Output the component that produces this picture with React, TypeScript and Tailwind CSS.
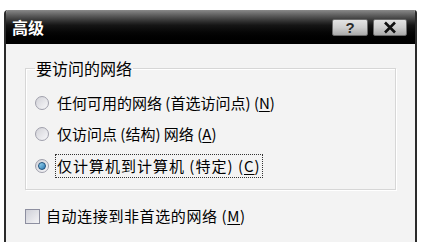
const font = { fontFamily: '"Noto Sans CJK SC", "Liberation Sans", sans-serif' };

const Radio = ({ checked }: { checked?: boolean }) => (
  <span className="relative flex h-[14px] w-[14px] shrink-0 items-center justify-center rounded-full border border-[#a0a0ac] bg-gradient-to-br from-[#d2d2d8] to-[#f8f8fa]">
    {checked && (
      <span className="h-[8px] w-[8px] rounded-full border border-[#1d4f7a] bg-gradient-to-br from-[#9adaf4] to-[#2a78b0]" />
    )}
  </span>
);

const Key = ({ k }: { k: string }) => (
  <span>
    (<span className="underline underline-offset-2">{k}</span>)
  </span>
);

const TitleButton = ({ children, w }: { children: React.ReactNode; w: string }) => (
  <div
    className={`flex h-[17px] ${w} items-center justify-center rounded-[2px] border border-[#6a6a6a] bg-gradient-to-b from-[#e4e4e4] via-[#cfcfcf] to-[#a9a9a9]`}
  >
    {children}
  </div>
);

export default function App() {
  return (
    <div className="h-[242px] w-[426px] overflow-hidden bg-white pl-[4px] pr-[9px] pt-[10px]" style={font}>
      <div className="flex h-full flex-col overflow-hidden rounded-tl-[4px] rounded-tr-[3px] border-x-2 border-[#2b2b2b]">
        {/* title bar */}
        <div className="flex h-[34px] shrink-0 items-center bg-gradient-to-b from-[#8a8a8a] via-[#151515] via-45% to-black pl-[6px] pr-[8px]">
          <span className="text-[16px] font-bold text-white">高级</span>
          <div className="ml-auto flex gap-[5px] pt-[1px]">
            <TitleButton w="w-[36px]">
              <span className="text-[15px] font-bold leading-none text-[#2a2a2a]" style={{ fontFamily: '"Liberation Sans", sans-serif' }}>
                ?
              </span>
            </TitleButton>
            <TitleButton w="w-[34px]">
              <svg width="16" height="13" viewBox="0 0 16 13">
                <path d="M3 1.5 L13 11.5 M13 1.5 L3 11.5" stroke="#111" strokeWidth="2.6" />
              </svg>
            </TitleButton>
          </div>
        </div>

        {/* body */}
        <div className="flex flex-1 flex-col bg-[#f3f3f3] pl-[19px] pr-[19px] pt-[15px] text-[15px] text-black">
          <fieldset className="h-[131px] border border-[#d6d6d6] pl-[9px] shadow-[inset_1px_1px_0_#fff,1px_1px_0_#fff]">
            <legend className="px-[1px] text-[16px] leading-[18px]">要访问的网络</legend>
            <div className="flex flex-col pt-[11px]">
              <div className="flex h-[30px] items-center gap-[8px]">
                <Radio />
                <span>
                  任何可用的网络 (首选访问点) <Key k="N" />
                </span>
              </div>
              <div className="flex h-[32px] items-center gap-[8px]">
                <Radio />
                <span>
                  仅访问点 (结构) 网络 <Key k="A" />
                </span>
              </div>
              <div className="flex h-[32px] items-center gap-[6px]">
                <Radio checked />
                <span className="border border-dotted border-[#333] px-[1px] tracking-[1px]">
                  仅计算机到计算机 (特定) <Key k="C" />
                </span>
              </div>
            </div>
          </fieldset>

          <div className="mt-[15px] flex items-center gap-[6px]">
            <span className="h-[15px] w-[15px] border border-[#8d8fa0] bg-gradient-to-br from-[#cfd0d8] to-[#f4f4f6]" />
            <span className="tracking-[0.6px]">
              自动连接到非首选的网络 <Key k="M" />
            </span>
          </div>
        </div>
      </div>
    </div>
  );
}
